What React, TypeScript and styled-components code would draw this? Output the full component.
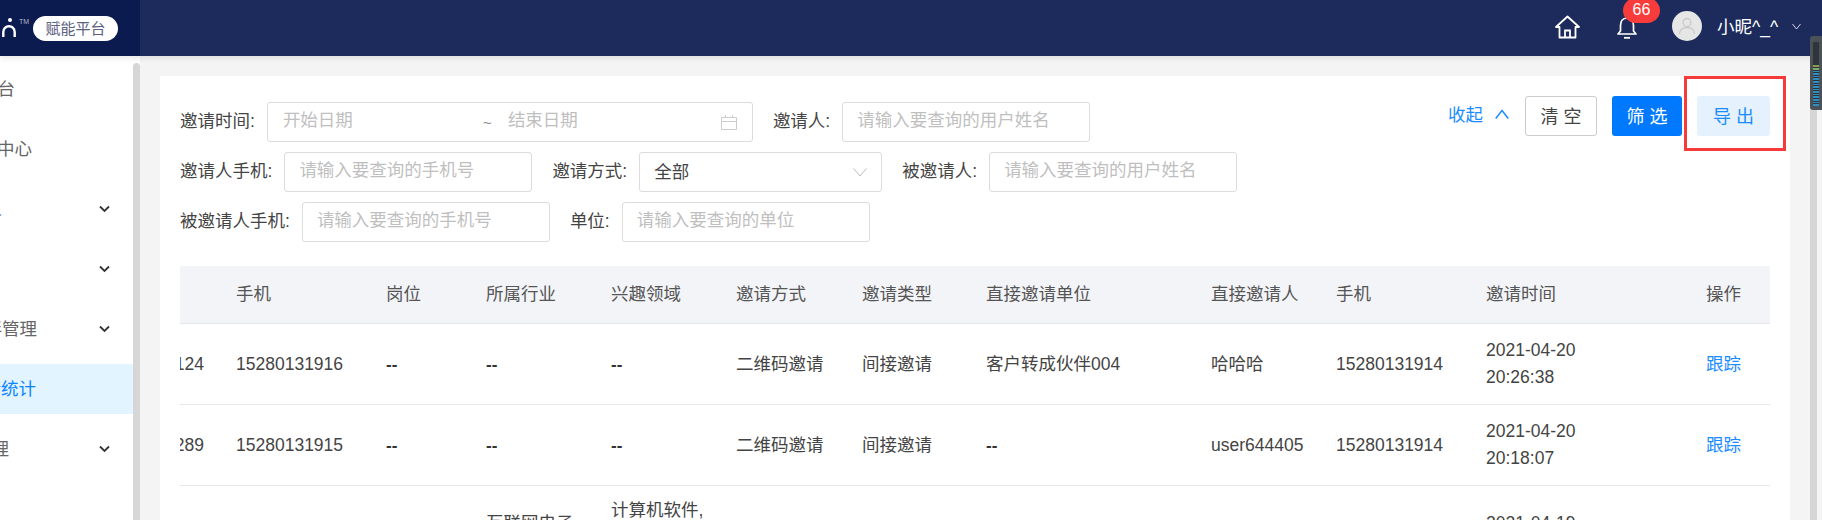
import React from "react";
import styled, { createGlobalStyle } from "styled-components";

const Global = createGlobalStyle`
  html, body { margin: 0; padding: 0; height: 520px; overflow: hidden; background: #f4f4f4; }
  * { box-sizing: border-box; }
  body { font-family: "Liberation Sans", "Noto Sans CJK SC", sans-serif; font-size: 17.5px; color: #444; }
`;

const Page = styled.div`
  position: relative;
  width: 1822px;
  height: 520px;
  overflow: hidden;
  display: flex;
  flex-direction: column;
`;
const Topbar = styled.header`
  position: relative;
  z-index: 2;
  height: 56px;
  flex: none;
  display: flex;
  background: #1c2b5c;
  box-shadow: 0 2px 6px rgba(0, 0, 0, 0.1);
`;
const Brand = styled.div`
  width: 140px;
  background: #0b1a4f;
  display: flex;
  align-items: center;
  padding-left: 2px;
`;
const Tm = styled.span`
  font-size: 7px;
  color: #b5b8c6;
  margin: -14px 0 0 3px;
  width: 14px;
`;
const Pill = styled.div`
  width: 85px;
  height: 25px;
  border-radius: 13px;
  background: #fff;
  color: #5a6080;
  font-size: 15px;
  padding-bottom: 2px;
  display: flex;
  align-items: center;
  justify-content: center;
`;
const TopRight = styled.div`
  flex: 1;
  display: flex;
  align-items: center;
  justify-content: flex-end;
  padding-right: 21px;
  color: #fff;
`;
const HomeIcon = styled.svg`
  width: 25px;
  height: 24px;
  margin: 0 37px 3px 0;
`;
const BellWrap = styled.div`
  position: relative;
  width: 20px;
  height: 22px;
  margin: 0 35px 1px 0;
`;
const Badge = styled.span`
  position: absolute;
  left: 6px;
  top: -19px;
  width: 37px;
  height: 25px;
  border-radius: 13px;
  background: #f83b3b;
  color: #fff;
  font-size: 16px;
  display: flex;
  align-items: center;
  justify-content: center;
`;
const Avatar = styled.div`
  width: 30px;
  height: 30px;
  border-radius: 50%;
  background: #e6e6e6;
  display: flex;
  align-items: center;
  justify-content: center;
  margin: 0 15px 4px 0;
`;
const UserName = styled.span`
  width: 61px;
  white-space: nowrap;
  margin-right: 14px;
  padding-bottom: 6px;
`;
const UserCaret = styled.svg`
  width: 9px;
  height: 7px;
  margin-bottom: 3px;
`;
const Main = styled.div`
  flex: 1;
  display: flex;
  min-height: 0;
`;
const Sidebar = styled.aside`
  width: 140px;
  flex: none;
  background: #fff;
  display: flex;
`;
const Nav = styled.nav`
  width: 133px;
  padding-top: 8px;
  display: flex;
  flex-direction: column;
  gap: 10px;
`;
const NavItem = styled.div<{ $active?: boolean }>`
  flex: none;
  height: 50px;
  display: flex;
  align-items: center;
  justify-content: space-between;
  padding-right: 23px;
  background: ${(p) => (p.$active ? "#e1f4ff" : "transparent")};
  color: ${(p) => (p.$active ? "#0d84ff" : "#666")};
`;
const NavLabel = styled.span<{ $end: number }>`
  width: ${(p) => p.$end}px;
  display: flex;
  justify-content: flex-end;
  overflow: hidden;
  white-space: nowrap;
  padding-bottom: 4px;
`;
const NavScroll = styled.div`
  width: 7px;
  margin-top: 7px;
  background: #d6d6d6;
  border-radius: 4px 4px 0 0;
`;
const Content = styled.main`
  flex: 1;
  padding: 20px 20px 0;
  min-width: 0;
`;
const Card = styled.section`
  position: relative;
  background: #fff;
  height: 100%;
  padding: 20px 20px 0;
`;
const Highlight = styled.div`
  position: absolute;
  left: 1524px;
  top: 0;
  width: 102px;
  height: 75px;
  border: 3px solid #f63b3b;
`;
const FilterBar = styled.div`
  display: flex;
  justify-content: space-between;
  align-items: flex-start;
`;
const Filters = styled.div`
  padding-top: 6px;
  display: flex;
  flex-direction: column;
  gap: 10px;
`;
const FilterRow = styled.div`
  display: flex;
  gap: 20px;
`;
const Field = styled.label`
  display: flex;
  align-items: center;
  gap: 12px;
  white-space: nowrap;
`;
const Caption = styled.span`
  padding-bottom: 5px;
`;
const Box = styled.div<{ $w: number; $pad?: number }>`
  width: ${(p) => p.$w}px;
  height: 40px;
  border: 1px solid #dcdcdc;
  border-radius: 3px;
  background: #fff;
  display: flex;
  align-items: center;
  padding: 0 ${(p) => p.$pad ?? 14}px;
`;
const TextInput = styled.input`
  flex: 1;
  width: 100%;
  min-width: 0;
  border: 0;
  outline: 0;
  padding: 0 0 4px;
  background: transparent;
  font: inherit;
  color: #444;
  &::placeholder { color: #bfbfbf; opacity: 1; }
`;
const Tilde = styled.span`
  color: #888;
  width: 25px;
  flex: none;
  font-size: 15px;
`;
const DateSide = styled(TextInput)`
  flex: none;
  width: 200px;
`;
const DateEnd = styled(TextInput)`
  flex: 1;
`;
const Value = styled.span`
  flex: 1;
  padding-bottom: 4px;
`;
const Actions = styled.div`
  display: flex;
  align-items: center;
  height: 40px;
`;
const Collapse = styled.span`
  display: flex;
  align-items: center;
  gap: 12px;
  color: #1a8cff;
  margin-right: 16px;
  padding-bottom: 5px;
`;
const Btn = styled.button<{ $kind: "plain" | "primary" | "soft"; $w: number }>`
  width: ${(p) => p.$w}px;
  height: 40px;
  padding: 0 0 3px;
  font-family: inherit;
  font-size: 18px;
  white-space: pre;
  border-radius: 3px;
  margin-left: ${(p) => (p.$kind === "plain" ? 0 : 15)}px;
  border: 1px solid ${(p) => (p.$kind === "plain" ? "#ccc" : "transparent")};
  background: ${(p) => (p.$kind === "plain" ? "#fff" : p.$kind === "primary" ? "#0079fe" : "#e5f1fd")};
  color: ${(p) => (p.$kind === "plain" ? "#444" : p.$kind === "primary" ? "#fff" : "#1a8cff")};
`;
const Table = styled.div`
  margin-top: 24px;
  width: 1590px;
`;
const COLS = "41px 150px 100px 125px 125px 126px 124px 225px 125px 150px 220px 79px";
const HeadRow = styled.div`
  display: grid;
  grid-template-columns: ${COLS};
  height: 58px;
  background: #f3f4f8;
  border-bottom: 1px solid #e6e7eb;
  color: #555;
`;
const BodyRow = styled.div<{ $h: number }>`
  display: grid;
  grid-template-columns: ${COLS};
  height: ${(p) => p.$h}px;
  border-bottom: 1px solid #e8e8e8;
`;
const Cell = styled.div`
  padding: 0 15px;
  display: flex;
  align-items: center;
  line-height: 27px;
`;
const EdgeCell = styled.div<{ $pr: number }>`
  display: flex;
  align-items: center;
  justify-content: flex-end;
  overflow: hidden;
  white-space: nowrap;
  padding-right: ${(p) => p.$pr}px;
`;
const Dash = styled.span`
  color: #333;
  font-weight: 700;
  font-size: 17px;
`;
const Link = styled.span`
  color: #1a8cff;
`;
const PageScroll = styled.div`
  width: 12px;
  flex: none;
  display: flex;
`;
const PageTrack = styled.div`
  width: 7px;
  background: #d6d6d6;
`;
const Gadget = styled.div`
  position: absolute;
  right: 0;
  top: 36px;
  z-index: 3;
  width: 12px;
  height: 74px;
  border-radius: 3px 0 0 3px;
  background: #4a5258;
  padding: 6px 2px 4px 3px;
`;
const Meter = styled.div`
  height: 100%;
  width: 6px;
  display: flex;
  flex-direction: column;
  gap: 1px;
  background: #2c3237;
`;
const Tick = styled.span<{ $c: string }>`
  flex: 1;
  background: ${(p) => p.$c};
`;

const Chevron = () => (
  <svg width="11" height="8" viewBox="0 0 11 8" fill="none">
    <path d="M1 1.5 5.5 6 10 1.5" stroke="#333" strokeWidth="1.8" />
  </svg>
);

const meter = [...Array(9).fill("#30373c"), "#8a9a50", "#7fae6a", ...Array(14).fill("#2f8fc4")];

const phoneHint = "请输入要查询的手机号";
const nameHint = "请输入要查询的用户姓名";

export default function App() {
  return (
    <Page>
      <Global />
      <Topbar>
        <Brand>
          <svg width="14" height="22" viewBox="0 0 14 22" fill="none">
            <circle cx="8" cy="3" r="2" fill="#fff" />
            <path d="M1.3 20v-5a5.7 5.7 0 0 1 11.4 0v5" stroke="#fff" strokeWidth="2.4" />
          </svg>
          <Tm>TM</Tm>
          <Pill>赋能平台</Pill>
        </Brand>
        <TopRight>
          <HomeIcon viewBox="0 0 25 24" fill="none">
            <path d="M1 12 12.5 1.500 24 12h-3.500v10.500h-16V12Z" stroke="#fff" strokeWidth="1.800" strokeLinejoin="round" />
            <path d="M10 22v-6.500h5V22" stroke="#fff" strokeWidth="1.800" />
          </HomeIcon>
          <BellWrap>
            <svg width="20" height="22" viewBox="0 0 20 22" fill="none">
              <path d="M10 1C5.500 1 3.500 4.500 3.500 8.500V14L1 17h18l-2.500-3V8.500C16.500 4.500 14.500 1 10 1Z" stroke="#fff" strokeWidth="1.700" strokeLinejoin="round" />
              <path d="M7 20.800h6" stroke="#fff" strokeWidth="1.800" />
            </svg>
            <Badge>66</Badge>
          </BellWrap>
          <Avatar>
            <svg width="18" height="18" viewBox="0 0 18 18" fill="none">
              <circle cx="9" cy="5.500" r="4" stroke="#c9c9c9" strokeWidth="1.300" />
              <path d="M1.500 17c0-4 3-6.500 7.500-6.500s7.500 2.500 7.500 6.500" stroke="#c9c9c9" strokeWidth="1.300" />
            </svg>
          </Avatar>
          <UserName>小昵^_^</UserName>
          <UserCaret viewBox="0 0 9 7" fill="none">
            <path d="M.5 1 4.500 6l4-5" stroke="#d5d8e2" strokeWidth="1" />
          </UserCaret>
        </TopRight>
      </Topbar>
      <Main>
        <Sidebar>
          <Nav>
            <NavItem><NavLabel $end={15}>工作台</NavLabel></NavItem>
            <NavItem><NavLabel $end={32}>消息中心</NavLabel></NavItem>
            <NavItem><NavLabel $end={2}>人</NavLabel><Chevron /></NavItem>
            <NavItem><NavLabel $end={0}>内容</NavLabel><Chevron /></NavItem>
            <NavItem><NavLabel $end={37}>伙伴管理</NavLabel><Chevron /></NavItem>
            <NavItem $active><NavLabel $end={36}>邀请统计</NavLabel></NavItem>
            <NavItem><NavLabel $end={9}>管理</NavLabel><Chevron /></NavItem>
            <NavItem><NavLabel $end={2}>日</NavLabel></NavItem>
          </Nav>
          <NavScroll />
        </Sidebar>
        <Content>
          <Card>
            <FilterBar>
              <Filters>
                <FilterRow>
                  <Field>
                    <Caption>邀请时间:</Caption>
                    <Box $w={486} $pad={15}>
                      <DateSide placeholder="开始日期" />
                      <Tilde>~</Tilde>
                      <DateEnd placeholder="结束日期" />
                      <svg width="16" height="15" viewBox="0 0 16 15" fill="none">
                        <path d="M.5 2.500h15v12H.5zM.5 6.500h15M4.500 0v3M11.500 0v3" stroke="#ccc" />
                      </svg>
                    </Box>
                  </Field>
                  <Field>
                    <Caption>邀请人:</Caption>
                    <Box $w={248}><TextInput placeholder={nameHint} /></Box>
                  </Field>
                </FilterRow>
                <FilterRow>
                  <Field>
                    <Caption>邀请人手机:</Caption>
                    <Box $w={248}><TextInput placeholder={phoneHint} /></Box>
                  </Field>
                  <Field>
                    <Caption>邀请方式:</Caption>
                    <Box $w={243}>
                      <Value>全部</Value>
                      <svg width="14" height="9" viewBox="0 0 14 9" fill="none">
                        <path d="M.5.500 7 8l6.500-7.500" stroke="#bbb" />
                      </svg>
                    </Box>
                  </Field>
                  <Field>
                    <Caption>被邀请人:</Caption>
                    <Box $w={248}><TextInput placeholder={nameHint} /></Box>
                  </Field>
                </FilterRow>
                <FilterRow>
                  <Field>
                    <Caption>被邀请人手机:</Caption>
                    <Box $w={248}><TextInput placeholder={phoneHint} /></Box>
                  </Field>
                  <Field>
                    <Caption>单位:</Caption>
                    <Box $w={248}><TextInput placeholder="请输入要查询的单位" /></Box>
                  </Field>
                </FilterRow>
              </Filters>
              <Actions>
                <Collapse>
                  收起
                  <svg width="14" height="10" viewBox="0 0 14 10" fill="none">
                    <path d="M.7 9.500 7 1.500l6.300 8" stroke="#1a8cff" strokeWidth="1.500" />
                  </svg>
                </Collapse>
                <Btn $kind="plain" $w={72}>清 空</Btn>
                <Btn $kind="primary" $w={70}>筛 选</Btn>
                <Btn $kind="soft" $w={73}>导 出</Btn>
              </Actions>
            </FilterBar>
            <Highlight />
            <Table>
              <HeadRow>
                <EdgeCell $pr={40}>姓名</EdgeCell>
                <Cell>手机</Cell>
                <Cell>岗位</Cell>
                <Cell>所属行业</Cell>
                <Cell>兴趣领域</Cell>
                <Cell>邀请方式</Cell>
                <Cell>邀请类型</Cell>
                <Cell>直接邀请单位</Cell>
                <Cell>直接邀请人</Cell>
                <Cell>手机</Cell>
                <Cell>邀请时间</Cell>
                <Cell>操作</Cell>
              </HeadRow>
              <BodyRow $h={81}>
                <EdgeCell $pr={17}>1124</EdgeCell>
                <Cell>15280131916</Cell>
                <Cell><Dash>--</Dash></Cell>
                <Cell><Dash>--</Dash></Cell>
                <Cell><Dash>--</Dash></Cell>
                <Cell>二维码邀请</Cell>
                <Cell>间接邀请</Cell>
                <Cell>客户转成伙伴004</Cell>
                <Cell>哈哈哈</Cell>
                <Cell>15280131914</Cell>
                <Cell>2021-04-20<br />20:26:38</Cell>
                <Cell><Link>跟踪</Link></Cell>
              </BodyRow>
              <BodyRow $h={81}>
                <EdgeCell $pr={17}>1289</EdgeCell>
                <Cell>15280131915</Cell>
                <Cell><Dash>--</Dash></Cell>
                <Cell><Dash>--</Dash></Cell>
                <Cell><Dash>--</Dash></Cell>
                <Cell>二维码邀请</Cell>
                <Cell>间接邀请</Cell>
                <Cell><Dash>--</Dash></Cell>
                <Cell>user644405</Cell>
                <Cell>15280131914</Cell>
                <Cell>2021-04-20<br />20:18:07</Cell>
                <Cell><Link>跟踪</Link></Cell>
              </BodyRow>
              <BodyRow $h={103}>
                <EdgeCell $pr={17}></EdgeCell>
                <Cell></Cell>
                <Cell></Cell>
                <Cell>互联网电子<br />商务</Cell>
                <Cell>计算机软件,<br />互联网,<br />通信</Cell>
                <Cell></Cell>
                <Cell></Cell>
                <Cell></Cell>
                <Cell></Cell>
                <Cell></Cell>
                <Cell>2021-04-19<br />20:10:00</Cell>
                <Cell></Cell>
              </BodyRow>
            </Table>
          </Card>
        </Content>
        <PageScroll><PageTrack /></PageScroll>
      </Main>
      <Gadget>
        <Meter>
          {meter.map((c, i) => (
            <Tick key={i} $c={c} />
          ))}
        </Meter>
      </Gadget>
    </Page>
  );
}
